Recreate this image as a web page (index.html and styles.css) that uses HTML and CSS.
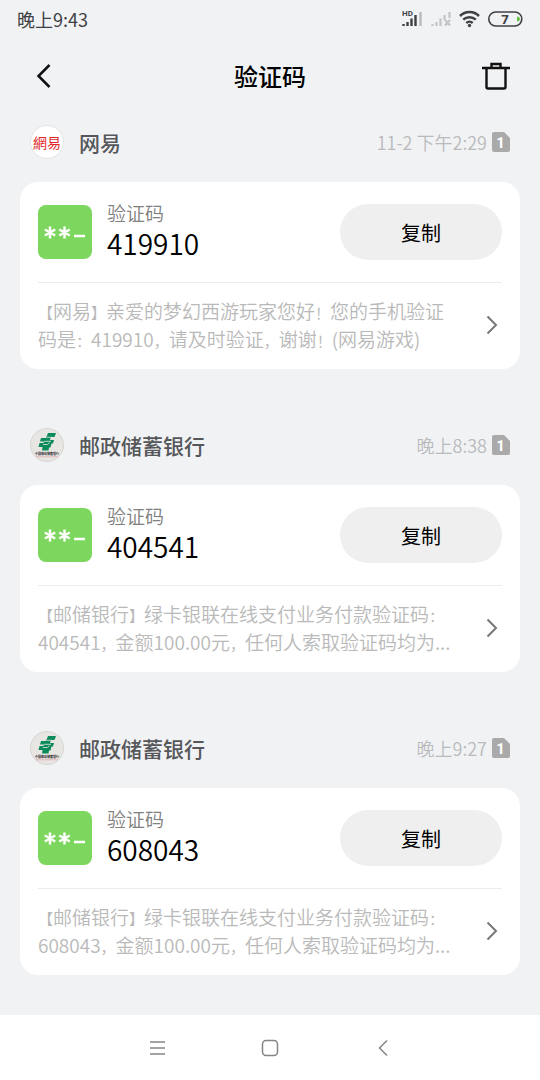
FILE: index.html
```html
<!DOCTYPE html>
<html lang="zh-CN">
<head>
<meta charset="utf-8">
<meta name="viewport" content="width=device-width, initial-scale=1">
<title>验证码</title>
<link rel="stylesheet" href="styles.css">
</head>
<body>
<svg class="defs" aria-hidden="true">
  <symbol id="psbc" viewBox="0 0 34 34">
    <circle cx="17" cy="17" r="16.500" fill="#e8e6e3" stroke="#d6d5d2"/>
    <path d="M18 5h8l-1.500 4H21l-1 3h4l-1 3.500h-1.500l-1 4H19l-.5 3H12l.5-3.500H8.500L9.500 15h4l.5-1.500h-4l1-3.500h5z" fill="#0b8a5c"/>
    <path d="M16.500 9.300H22M14 13.300h7M13 16.500h4.500l2-1.800" stroke="#e8e6e3" stroke-width=".8" fill="none"/>
    <text x="17" y="27" text-anchor="middle" class="psbc-name">中国邮政储蓄银行</text>
    <path d="M6 28.800h22" stroke="#d99" stroke-width=".6"/>
  </symbol>
  <symbol id="code" viewBox="0 0 54 54">
    <rect width="54" height="54" rx="8" fill="#7dd75f"/>
    <path d="M12 21.500v12M6.800 24.500l10.400 6M17.200 24.500l-10.400 6M26.500 21.500v12M21.300 24.500l10.400 6M31.700 24.500l-10.400 6M36 31h11" stroke="#fff" stroke-width="2.500" fill="none"/>
  </symbol>
  <symbol id="sim" viewBox="0 0 18 20">
    <path d="M2 0h10l6 6v12a2 2 0 0 1-2 2H2a2 2 0 0 1-2-2V2a2 2 0 0 1 2-2z" fill="#aaa"/>
    <text x="8.500" y="16" text-anchor="middle" class="sim-number">1</text>
  </symbol>
  <symbol id="next" viewBox="0 0 12 20">
    <path d="M1.500 1.500L10 10l-8.500 8.500" fill="none" stroke="#777" stroke-width="2"/>
  </symbol>
</svg>

<header class="status">
  <span>晚上9:43</span>
  <svg class="status-icons" viewBox="0 0 122 20" aria-hidden="true">
    <text x="0" y="7" class="hd">HD</text>
    <path d="M1.500 17v-2M5.500 17v-4M9.500 17V9.500M13.500 17V6" stroke="#3f4144" stroke-width="2.400"/>
    <path d="M18.500 17V3" stroke="#b9babb" stroke-width="2.400"/>
    <path d="M30.500 17v-2M34.500 17v-4M38.500 17V9.500M42.500 11V6M47.500 9V3M43 11l5 5.500M48 11l-5 5.500" stroke="#c3c4c5" stroke-width="2.200"/>
    <path d="M58 7a13.500 13.500 0 0 1 19 0M61.200 10.700a9 9 0 0 1 12.600 0M64.300 14a4.800 4.800 0 0 1 6.400 0" stroke="#3f4144" stroke-width="2.500" fill="none"/>
    <circle cx="67.500" cy="16.500" r="1.700" fill="#3f4144"/>
    <rect x="86.800" y="3" width="33" height="14" rx="7" fill="none" stroke="#3f4144" stroke-width="1.600"/>
    <path d="M115.500 8h1q2 2 0 4h-1z" stroke="#65c044" fill="#65c044"/>
    <text x="103" y="14.500" text-anchor="middle" class="battery-level">7</text>
  </svg>
</header>

<nav class="toolbar">
  <button class="icon-button" type="button" aria-label="返回">
    <svg width="28" height="28" viewBox="0 0 28 28"><path d="M19.500 3L8.500 14l11 11" fill="none" stroke="#111" stroke-width="2.500"/></svg>
  </button>
  <h1 class="title">验证码</h1>
  <button class="icon-button" type="button" aria-label="删除">
    <svg width="28" height="28" viewBox="0 0 28 28"><path d="M0 6h28M9.500 5.500V2h9v3.500M4.500 6v19q0 1.500 1.500 1.500h16q1.500 0 1.500-1.500V6" fill="none" stroke="#111" stroke-width="2.400"/></svg>
  </button>
</nav>

<main class="list">
  <section class="entry">
    <div class="sender">
      <span class="avatar netease">網易</span>
      <h2 class="name">网易</h2>
      <time class="time">11-2 下午2:29</time>
      <svg class="sim" role="img" aria-label="卡1"><use href="#sim"/></svg>
    </div>
    <article class="card">
      <div class="code-row">
        <svg class="code-icon" aria-hidden="true"><use href="#code"/></svg>
        <div class="code"><span class="label">验证码</span><strong class="value">419910</strong></div>
        <button class="copy" type="button">复制</button>
      </div>
      <a class="message" href="#">
        <span class="text"><i>【</i>网易<i>】</i>亲爱的梦幻西游玩家您好<i>！</i>您的手机验证码是<i>：</i>419910<i>，</i>请及时验证<i>，</i>谢谢<i>！</i>(网易游戏)</span>
        <svg class="next" aria-hidden="true"><use href="#next"/></svg>
      </a>
    </article>
  </section>

  <section class="entry">
    <div class="sender">
      <svg class="avatar" aria-hidden="true"><use href="#psbc"/></svg>
      <h2 class="name">邮政储蓄银行</h2>
      <time class="time">晚上8:38</time>
      <svg class="sim" role="img" aria-label="卡1"><use href="#sim"/></svg>
    </div>
    <article class="card">
      <div class="code-row">
        <svg class="code-icon" aria-hidden="true"><use href="#code"/></svg>
        <div class="code"><span class="label">验证码</span><strong class="value">404541</strong></div>
        <button class="copy" type="button">复制</button>
      </div>
      <a class="message" href="#">
        <span class="text"><i>【</i>邮储银行<i>】</i>绿卡银联在线支付业务付款验证码<i>：</i>404541<i>，</i>金额100.00元<i>，</i>任何人索取验证码均为...</span>
        <svg class="next" aria-hidden="true"><use href="#next"/></svg>
      </a>
    </article>
  </section>

  <section class="entry">
    <div class="sender">
      <svg class="avatar" aria-hidden="true"><use href="#psbc"/></svg>
      <h2 class="name">邮政储蓄银行</h2>
      <time class="time">晚上9:27</time>
      <svg class="sim" role="img" aria-label="卡1"><use href="#sim"/></svg>
    </div>
    <article class="card">
      <div class="code-row">
        <svg class="code-icon" aria-hidden="true"><use href="#code"/></svg>
        <div class="code"><span class="label">验证码</span><strong class="value">608043</strong></div>
        <button class="copy" type="button">复制</button>
      </div>
      <a class="message" href="#">
        <span class="text"><i>【</i>邮储银行<i>】</i>绿卡银联在线支付业务付款验证码<i>：</i>608043<i>，</i>金额100.00元<i>，</i>任何人索取验证码均为...</span>
        <svg class="next" aria-hidden="true"><use href="#next"/></svg>
      </a>
    </article>
  </section>
</main>

<footer class="system-nav">
  <button class="system-button" type="button" aria-label="菜单">
    <svg width="18" height="18" viewBox="0 0 18 18"><path d="M2 3h15M2 9h15M2 15h15" stroke="#858585" stroke-width="1.600"/></svg>
  </button>
  <button class="system-button" type="button" aria-label="主页">
    <svg width="18" height="18" viewBox="0 0 18 18"><rect x="1.500" y="1.500" width="15" height="15" rx="3.500" fill="none" stroke="#858585" stroke-width="1.500"/></svg>
  </button>
  <button class="system-button" type="button" aria-label="后退">
    <svg width="18" height="18" viewBox="0 0 18 18"><path d="M13 1.500L5.500 9l7.500 7.500" fill="none" stroke="#858585" stroke-width="1.500"/></svg>
  </button>
</footer>
</body>
</html>
```
FILE: styles.css
```css
* { box-sizing: border-box; }
body {
  margin: 0;
  min-height: 100vh;
  display: flex;
  flex-direction: column;
  background: #f1f2f4;
  color: #000;
  font-family: "Noto Sans CJK SC", sans-serif;
}
button { border: 0; padding: 0; background: none; font: inherit; color: inherit; }
.defs { display: none; }
.status {
  display: flex;
  align-items: center;
  justify-content: space-between;
  height: 38px;
  padding: 0 16px 0 17px;
  font-size: 18px;
  line-height: 26px;
  color: #3f4144;
}
.status-icons { width: 122px; height: 20px; }
.hd { font: bold 8px Roboto, sans-serif; fill: #3f4144; }
.battery-level { font: bold 13px "Open Sans", sans-serif; fill: #3f4144; }
.toolbar {
  display: flex;
  align-items: center;
  justify-content: space-between;
  height: 76px;
  padding: 0 30px;
}
.icon-button { display: flex; }
.title { margin: 0; font-size: 24px; line-height: 36px; font-weight: 500; }
.list {
  flex: 1;
  display: flex;
  flex-direction: column;
  gap: 48px;
  padding: 0 20px 40px;
}
.sender {
  display: flex;
  align-items: center;
  height: 68px;
  padding: 0 10px 12px;
}
.avatar { width: 34px; height: 34px; flex: none; }
.netease {
  display: flex;
  align-items: center;
  justify-content: center;
  border: 1px solid #e4e4e5;
  border-radius: 50%;
  background: #fff;
  color: #e02828;
  font-family: "Noto Sans CJK TC", sans-serif;
  font-size: 14px;
  font-weight: 400;
}
.psbc-name { font: bold 3px "Noto Sans CJK SC", sans-serif; fill: #333; }
.name {
  flex: 1;
  margin: 0 0 0 15px;
  font-size: 21px;
  line-height: 30px;
  font-weight: 500;
  color: #55575a;
}
.time { font-size: 18px; font-weight: 350; color: #b9babc; }
.sim { width: 18px; height: 20px; margin-left: 5px; }
.sim-number { font: bold 15px Roboto, sans-serif; fill: #fff; }
.card { padding: 0 18px; border-radius: 18px; background: #fff; }
.code-row {
  display: flex;
  align-items: center;
  padding: 20px 0;
  border-bottom: 1px solid #ececec;
}
.code-icon { width: 54px; height: 54px; flex: none; }
.code { flex: 1; display: flex; flex-direction: column; margin-left: 15px; }
.label { font-size: 19px; line-height: 22px; font-weight: 350; color: #808080; }
.value { font-size: 28px; line-height: 38px; font-weight: 350; }
.copy {
  width: 162px;
  height: 56px;
  border-radius: 28px;
  background: #efefef;
  font-size: 20px;
}
.message {
  display: flex;
  align-items: center;
  justify-content: space-between;
  padding: 14px 4px 16px 0;
  color: #b9b9b9;
  text-decoration: none;
}
.text { flex: 1; margin-right: 28px; font-size: 19px; line-height: 28px; font-weight: 350; }
.text i { font-size: 15px; line-height: 1; font-style: normal; }
.next { width: 12px; height: 20px; flex: none; }
.system-nav {
  display: flex;
  align-items: center;
  justify-content: center;
  gap: 95px;
  height: 65px;
  background: #fff;
}
.system-button { display: flex; }
```
